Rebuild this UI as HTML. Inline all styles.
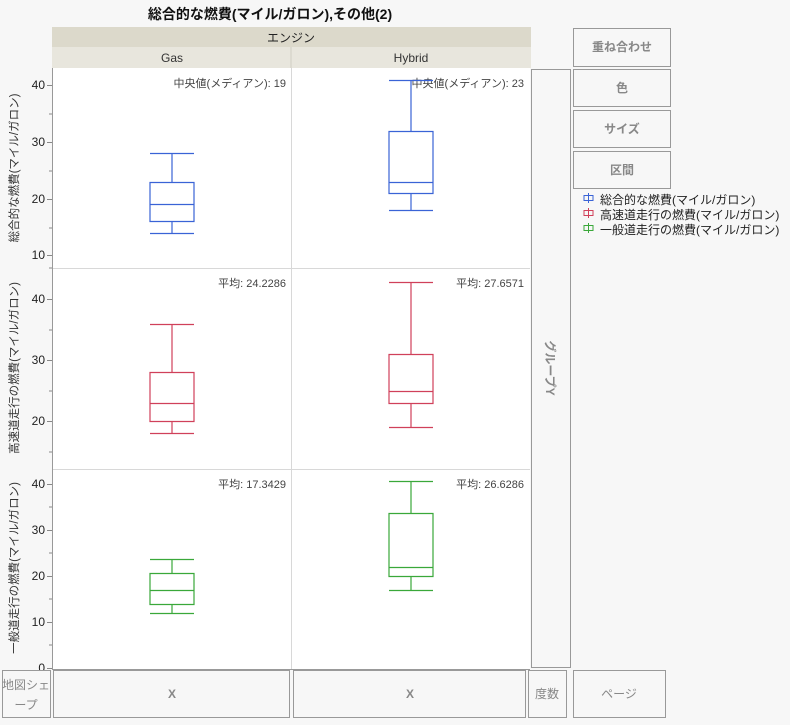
<!DOCTYPE html>
<html><head><meta charset="utf-8"><style>
body{margin:0;background:#f7f7f7;width:790px;height:720px;overflow:hidden;font-family:"Liberation Sans","Noto Sans CJK JP",sans-serif}
</style></head><body>
<svg width="790" height="720" xmlns="http://www.w3.org/2000/svg" font-family="Liberation Sans, Noto Sans CJK JP, sans-serif">
<rect width="790" height="720" fill="#f7f7f7"/>
<text x="270" y="19" font-size="14" font-weight="bold" text-anchor="middle" fill="#111">総合的な燃費(マイル/ガロン),その他(2)</text>
<rect x="52" y="27" width="479" height="20" fill="#dcd9cb"/>
<text x="291" y="42" font-size="12" text-anchor="middle" fill="#222">エンジン</text>
<rect x="52" y="47" width="479" height="21" fill="#e8e6dd"/>
<line x1="291" y1="47" x2="291" y2="68" stroke="#d0cec4"/>
<text x="172" y="62" font-size="12" text-anchor="middle" fill="#333">Gas</text>
<text x="411" y="62" font-size="12" text-anchor="middle" fill="#333">Hybrid</text>
<rect x="53" y="68" width="477" height="601" fill="#fff"/>
<line x1="291.5" y1="68" x2="291.5" y2="669" stroke="#d8d8d8"/>
<line x1="53" y1="268.5" x2="530" y2="268.5" stroke="#d8d8d8"/>
<line x1="53" y1="469.5" x2="530" y2="469.5" stroke="#d8d8d8"/>
<line x1="52.5" y1="68" x2="52.5" y2="670" stroke="#999"/>
<line x1="52" y1="669.5" x2="530" y2="669.5" stroke="#999"/>
<g font-size="12" fill="#222" text-anchor="end">
<text x="45" y="89">40</text><text x="45" y="146">30</text><text x="45" y="203">20</text><text x="45" y="259">10</text>
<text x="45" y="303">40</text><text x="45" y="364">30</text><text x="45" y="425">20</text>
<text x="45" y="488">40</text><text x="45" y="534">30</text><text x="45" y="580">20</text><text x="45" y="626">10</text><text x="45" y="672">0</text>
</g>
<g stroke="#888">
<path d="M47 85.5h5M49 114h3M47 142.5h5M49 171h3M47 199.5h5M49 228h3M47 255.5h5M49 268h3"/>
<path d="M47 299.5h5M49 330h3M47 360.5h5M49 391h3M47 421.5h5M49 452h3"/>
<path d="M47 484.5h5M49 507h3M47 530.5h5M49 553h3M47 576.5h5M49 599h3M47 622.5h5M49 645h3M47 668.5h5"/>
</g>
<g font-size="11.5" fill="#333" text-anchor="middle">
<text transform="translate(18,168) rotate(-90)">総合的な燃費(マイル/ガロン)</text>
<text transform="translate(18,368) rotate(-90)">高速道走行の燃費(マイル/ガロン)</text>
<text transform="translate(18,568) rotate(-90)">一般道走行の燃費(マイル/ガロン)</text>
</g>
<g font-size="11" fill="#444" text-anchor="end">
<text x="286" y="87">中央値(メディアン): 19</text>
<text x="524" y="87">中央値(メディアン): 23</text>
<text x="286" y="287">平均: 24.2286</text>
<text x="524" y="287">平均: 27.6571</text>
<text x="286" y="488">平均: 17.3429</text>
<text x="524" y="488">平均: 26.6286</text>
</g>
<g fill="none" stroke-width="1.2">
<g stroke="#3a63d6">
<path d="M150 153.5h44M172 153.5v29M150 182.5h44v39h-44zM150 204.5h44M172 221.5v12M150 233.5h44"/>
<path d="M389 80.5h44M411 80.5v51M389 131.5h44v62h-44zM389 182.5h44M411 193.5v17M389 210.5h44"/>
</g>
<g stroke="#d0405a">
<path d="M150 324.5h44M172 324.5v48M150 372.5h44v49h-44zM150 403.5h44M172 421.5v12M150 433.5h44"/>
<path d="M389 282.5h44M411 282.5v72M389 354.5h44v49h-44zM389 391.5h44M411 403.5v24M389 427.5h44"/>
</g>
<g stroke="#3aa83a">
<path d="M150 559.5h44M172 559.5v14M150 573.5h44v31h-44zM150 590.5h44M172 604.5v9M150 613.5h44"/>
<path d="M389 481.5h44M411 481.5v32M389 513.5h44v63h-44zM389 567.5h44M411 576.5v14M389 590.5h44"/>
</g>
</g>
<rect x="531.5" y="69.5" width="39" height="598" fill="#f7f7f7" stroke="#999"/>
<text transform="translate(546,368) rotate(90)" font-size="12" font-weight="bold" fill="#888" text-anchor="middle">グループY</text>
<g fill="#f7f7f7" stroke="#999">
<rect x="573.5" y="28.5" width="97" height="38"/><rect x="573.5" y="69.5" width="97" height="37"/>
<rect x="573.5" y="110.5" width="97" height="37"/><rect x="573.5" y="151.5" width="97" height="37"/>
<rect x="2.5" y="670.5" width="48" height="47"/><rect x="53.5" y="670.5" width="236" height="47"/>
<rect x="293.5" y="670.5" width="232" height="47"/><rect x="528.5" y="670.5" width="38" height="47"/>
<rect x="573.5" y="670.5" width="92" height="47"/>
</g>
<g font-size="12" font-weight="bold" fill="#888" text-anchor="middle">
<text x="622" y="51">重ね合わせ</text><text x="622" y="92">色</text><text x="622" y="133">サイズ</text><text x="622" y="174">区間</text>
<text x="172" y="698">X</text><text x="410" y="698">X</text>
</g>
<g font-size="12" fill="#888" text-anchor="middle">
<text x="26" y="689">地図シェ</text><text x="26" y="709">ープ</text>
<text x="547" y="698">度数</text><text x="619" y="698">ページ</text>
</g>
<g fill="none" stroke-width="1">
<path d="M584 195.5h9v5h-9zM588.5 193v10" stroke="#3a63d6"/>
<path d="M584 210.5h9v5h-9zM588.5 208v10" stroke="#d0405a"/>
<path d="M584 225.5h9v5h-9zM588.5 223v10" stroke="#3aa83a"/>
</g>
<g font-size="12" fill="#222">
<text x="600" y="204">総合的な燃費(マイル/ガロン)</text>
<text x="600" y="219">高速道走行の燃費(マイル/ガロン)</text>
<text x="600" y="234">一般道走行の燃費(マイル/ガロン)</text>
</g>
</svg>
</body></html>
